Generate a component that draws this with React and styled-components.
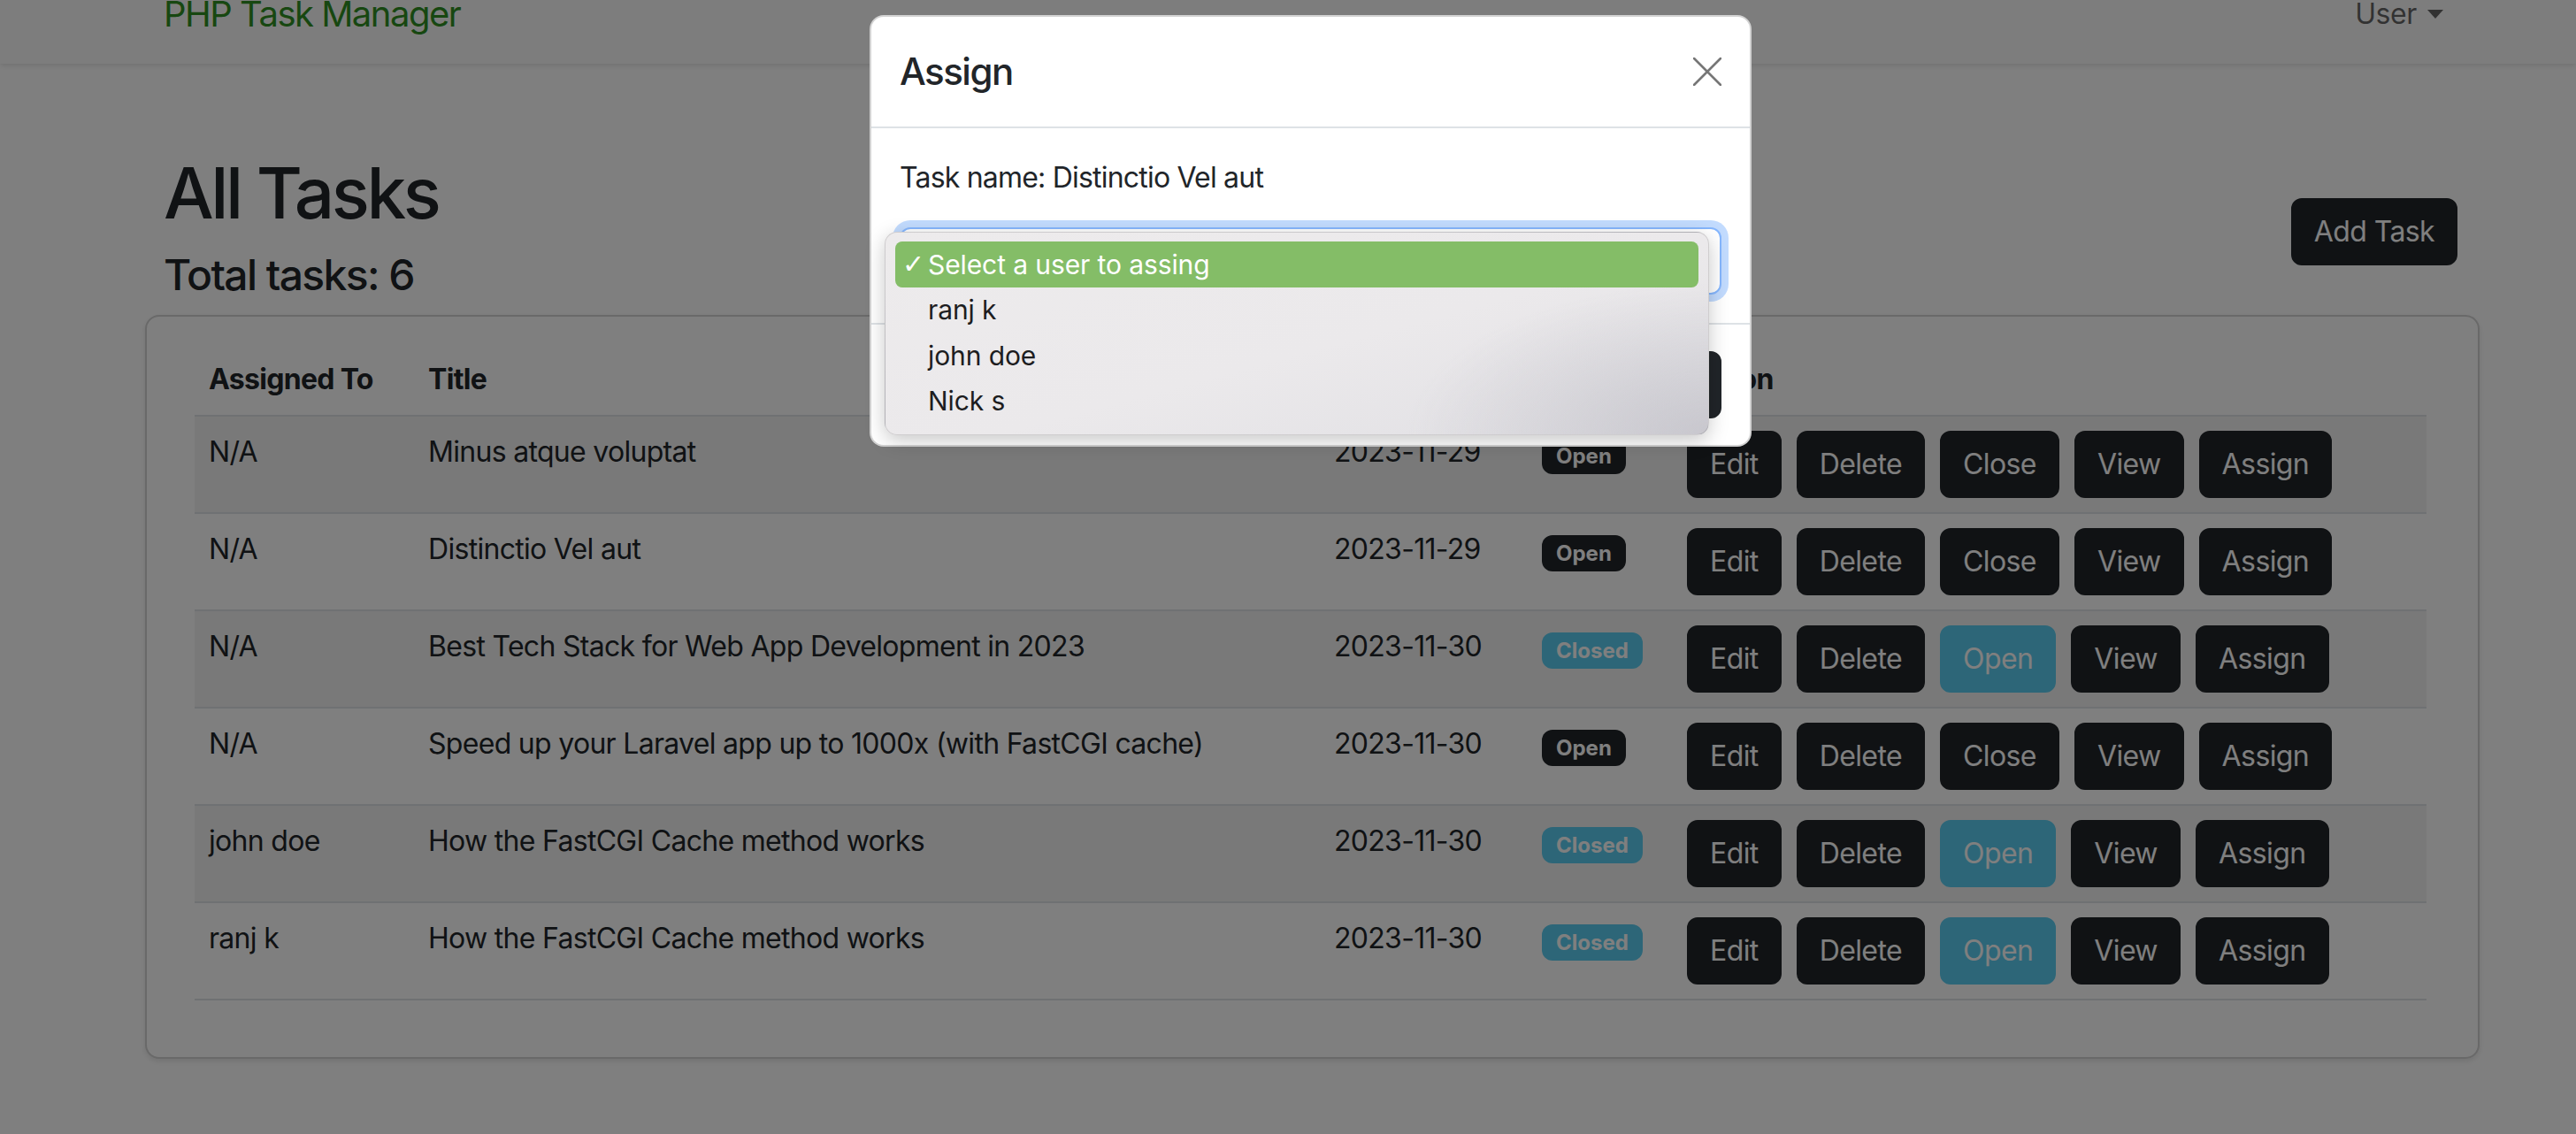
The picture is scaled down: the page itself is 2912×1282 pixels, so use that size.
import React from 'react';
import styled, { createGlobalStyle } from 'styled-components';

const GlobalStyle = createGlobalStyle`
  html, body {
    margin: 0;
    padding: 0;
  }
  body {
    font-family: Inter, "Liberation Sans", Arial, sans-serif;
    color: #212529;
    background: #fff;
    overflow: hidden;
  }
  * {
    box-sizing: border-box;
  }
`;

const Page = styled.div`
  position: relative;
  width: 2912px;
  height: 1282px;
  overflow: hidden;
`;

// the page is scrolled a little, so the navbar top is cut off
const Scrolled = styled.div`
  margin-top: -40px;
`;

const Navbar = styled.nav`
  height: 112px;
  display: flex;
  align-items: center;
  justify-content: space-between;
  padding: 0 150px 0 185px;
  background: #fbfbfb;
  box-shadow: 0 2px 6px rgba(0, 0, 0, 0.12);
`;

const Brand = styled.a`
  font-size: 40px;
  line-height: 60px;
  letter-spacing: -1.5px;
  color: #2f8f22;
  text-decoration: none;
`;

const UserToggle = styled.a`
  display: flex;
  align-items: center;
  font-size: 32px;
  line-height: 48px;
  letter-spacing: -0.4px;
  color: rgba(0, 0, 0, 0.6);

  &::after {
    content: '';
    margin-left: 12px;
    border-top: 10px solid rgba(0, 0, 0, 0.6);
    border-left: 9px solid transparent;
    border-right: 9px solid transparent;
  }
`;

const Main = styled.main`
  margin-left: 164px;
  width: 2639px;
`;

const HeadingRow = styled.div`
  display: flex;
  justify-content: space-between;
  align-items: flex-end;
  margin-top: 98px;
  padding: 0 25px 0 21px;
`;

const Title = styled.h1`
  margin: 0 0 16px;
  font-size: 80px;
  line-height: 96px;
  font-weight: 500;
  letter-spacing: -3.4px;
`;

const Subtitle = styled.h4`
  margin: 0;
  font-size: 48px;
  line-height: 58px;
  font-weight: 500;
  letter-spacing: -1.6px;
`;

const Button = styled.button`
  font-family: inherit;
  font-size: 32px;
  line-height: 48px;
  padding: 12px 24px;
  border: 2px solid ${(p) => (p.$variant === 'info' ? '#5bcdf0' : p.$variant === 'secondary' ? '#6c757d' : '#212529')};
  border-radius: 12px;
  background: ${(p) => (p.$variant === 'info' ? '#5bcdf0' : p.$variant === 'secondary' ? '#6c757d' : '#212529')};
  color: #fff;
  letter-spacing: -0.6px;
  white-space: nowrap;
`;

const AddButton = styled(Button)`
  margin-bottom: 40px;
`;

const Card = styled.div`
  margin-top: 16px;
  padding: 31px 58px 64px 54px;
  border: 2px solid rgba(0, 0, 0, 0.175);
  border-radius: 16px;
  background: #fff;
  box-shadow: 0 3px 6px rgba(0, 0, 0, 0.1);
`;

const Table = styled.table`
  width: 100%;
  border-collapse: collapse;
  table-layout: fixed;
  font-size: 32px;
  line-height: 48px;
  letter-spacing: -0.7px;
`;

const Th = styled.th`
  padding: 16px;
  text-align: left;
  font-weight: 700;
  border-bottom: 2px solid #dee2e6;
`;

const Row = styled.tr`
  background: ${(p) => (p.$striped ? 'rgba(0, 0, 0, 0.05)' : 'transparent')};
`;

const Td = styled.td`
  padding: 16px;
  vertical-align: top;
  border-bottom: 2px solid #dee2e6;
  white-space: nowrap;
`;

const Badge = styled.span`
  display: inline-block;
  vertical-align: top;
  margin-top: 8px;
  padding: 8px 16px;
  border-radius: 12px;
  font-size: 24px;
  line-height: 25px;
  font-weight: 700;
  letter-spacing: 0;
  color: #fff;
  background: ${(p) => (p.$closed ? '#5bcdf0' : '#212529')};
`;

const Actions = styled.div`
  display: flex;
  gap: 17px;
`;

const Backdrop = styled.div`
  position: absolute;
  inset: 0;
  background: rgba(0, 0, 0, 0.5);
`;

const Modal = styled.div`
  position: absolute;
  left: 983px;
  top: 17px;
  width: 997px;
  background: #fff;
  border: 2px solid rgba(0, 0, 0, 0.175);
  border-radius: 16px;
`;

const ModalHeader = styled.div`
  display: flex;
  justify-content: space-between;
  align-items: center;
  padding: 32px;
  border-bottom: 2px solid #dee2e6;
`;

const ModalTitle = styled.h5`
  margin: 0;
  font-size: 42px;
  line-height: 60px;
  font-weight: 500;
  letter-spacing: -1.5px;
`;

const CloseIcon = styled.svg`
  width: 32px;
  height: 32px;
  display: block;
`;

const ModalBody = styled.div`
  padding: 32px;
`;

const TaskName = styled.p`
  margin: 0 0 32px;
  font-size: 32px;
  line-height: 48px;
  letter-spacing: -0.8px;
`;

const SelectBox = styled.div`
  height: 76px;
  border: 2px solid #86b7fe;
  border-radius: 12px;
  background: #fff;
  box-shadow: 0 0 0 8px rgba(13, 110, 253, 0.25);
`;

const ModalFooter = styled.div`
  display: flex;
  justify-content: flex-end;
  gap: 16px;
  padding: 30px 32px;
  border-top: 2px solid #dee2e6;
`;

const Popup = styled.div`
  position: absolute;
  left: 15px;
  top: 243px;
  width: 932px;
  padding: 10px 11px 12px;
  border: 1px solid rgba(0, 0, 0, 0.12);
  border-radius: 14px;
  background:
    radial-gradient(ellipse 340px 170px at 100% 100%, rgba(196, 195, 202, 0.85), rgba(220, 219, 224, 0) 100%),
    linear-gradient(165deg, #edebec 0%, #ebe9eb 55%, #e0dfe3 100%);
  box-shadow: 0 6px 22px rgba(0, 0, 0, 0.22);
  font-size: 30px;
  letter-spacing: -0.1px;
`;

const Option = styled.div`
  display: flex;
  align-items: center;
  height: 51.5px;
  padding-left: 8px;
  border-radius: 8px;
  color: ${(p) => (p.$selected ? '#fff' : '#1d1d1f')};
  background: ${(p) => (p.$selected ? '#84bd67' : 'transparent')};
`;

const Check = styled.span`
  width: 29px;
  font-size: 30px;
  font-family: "DejaVu Sans", sans-serif;
`;

const tasks = [
  { user: 'N/A', title: 'Minus atque voluptat', date: '2023-11-29', closed: false },
  { user: 'N/A', title: 'Distinctio Vel aut', date: '2023-11-29', closed: false },
  { user: 'N/A', title: 'Best Tech Stack for Web App Development in 2023', date: '2023-11-30', closed: true },
  { user: 'N/A', title: 'Speed up your Laravel app up to 1000x (with FastCGI cache)', date: '2023-11-30', closed: false },
  { user: 'john doe', title: 'How the FastCGI Cache method works', date: '2023-11-30', closed: true },
  { user: 'ranj k', title: 'How the FastCGI Cache method works', date: '2023-11-30', closed: true },
];

const users = ['Select a user to assing', 'ranj k', 'john doe', 'Nick s'];

const App = () => {
  return (
    <Page>
      <GlobalStyle />
      <Scrolled>
        <Navbar>
          <Brand>PHP Task Manager</Brand>
          <UserToggle>User</UserToggle>
        </Navbar>
        <Main>
          <HeadingRow>
            <div>
              <Title>All Tasks</Title>
              <Subtitle>Total tasks: 6</Subtitle>
            </div>
            <AddButton>Add Task</AddButton>
          </HeadingRow>
          <Card>
            <Table>
              <colgroup>
                <col style={{ width: 248 }} />
                <col style={{ width: 1024 }} />
                <col style={{ width: 235 }} />
                <col style={{ width: 164 }} />
                <col />
              </colgroup>
              <thead>
                <tr>
                  <Th>Assigned To</Th>
                  <Th>Title</Th>
                  <Th>Due Date</Th>
                  <Th>Status</Th>
                  <Th>Action</Th>
                </tr>
              </thead>
              <tbody>
                {tasks.map((t, i) => (
                  <Row key={i} $striped={i % 2 === 0}>
                    <Td>{t.user}</Td>
                    <Td>{t.title}</Td>
                    <Td>{t.date}</Td>
                    <Td>
                      <Badge $closed={t.closed}>{t.closed ? 'Closed' : 'Open'}</Badge>
                    </Td>
                    <Td>
                      <Actions>
                        <Button>Edit</Button>
                        <Button>Delete</Button>
                        {t.closed ? <Button $variant="info">Open</Button> : <Button>Close</Button>}
                        <Button>View</Button>
                        <Button>Assign</Button>
                      </Actions>
                    </Td>
                  </Row>
                ))}
              </tbody>
            </Table>
          </Card>
        </Main>
      </Scrolled>

      <Backdrop />
      <Modal>
        <ModalHeader>
          <ModalTitle>Assign</ModalTitle>
          <CloseIcon viewBox="0 0 32 32">
            <path d="M1 1 L31 31 M31 1 L1 31" stroke="#767676" strokeWidth="2.6" strokeLinecap="round" fill="none" />
          </CloseIcon>
        </ModalHeader>
        <ModalBody>
          <TaskName>Task name: Distinctio Vel aut</TaskName>
          <SelectBox />
        </ModalBody>
        <ModalFooter>
          <Button $variant="secondary">Close</Button>
          <Button>Assign</Button>
        </ModalFooter>
        <Popup>
          {users.map((u, i) => (
            <Option key={u} $selected={i === 0}>
              <Check>{i === 0 ? '✓' : ''}</Check>
              {u}
            </Option>
          ))}
        </Popup>
      </Modal>
    </Page>
  );
};

export default App;
